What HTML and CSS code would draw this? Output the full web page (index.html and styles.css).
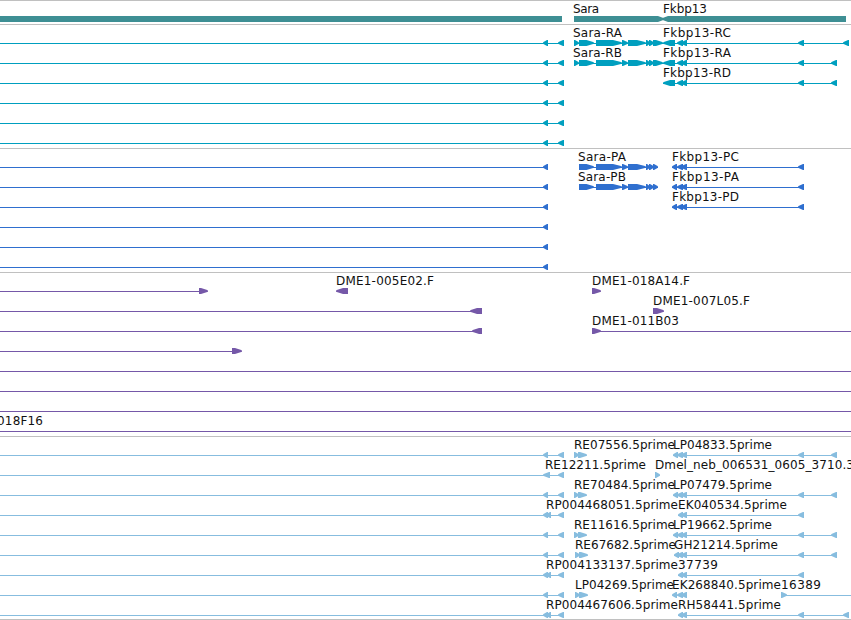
FILE: index.html
```
<!DOCTYPE html>
<html lang="en">
<head>
  <meta charset="UTF-8">
  <meta name="viewport" content="width=device-width, initial-scale=1.0">
  <title>Sara / Fkbp13</title>
  <link rel="stylesheet" href="styles.css">
</head>
<body>
  <div class="browser">
    <div class="track gene" id="gene"></div>
    <div class="track transcript" id="transcript"></div>
    <div class="track protein" id="protein"></div>
    <div class="track clone" id="clone"></div>
    <div class="track est" id="est"></div>
  </div>
  <script src="tracks.js"></script>
</body>
</html>
```

FILE: styles.css
```
body {
  margin: 0;
  background-color: #fff;
  overflow: hidden;
}
.browser {
  width: 851px;
  height: 619px;
  overflow: hidden;
  border-bottom: 1px solid #c0c0c0;
}
.track {
  border-top: 1px solid #c0c0c0;
  padding-top: 3px;
}
.row {
  display: block;
  width: 851px;
  height: 20px;
  overflow: visible;
}
.row text {
  font-family: "DejaVu Sans", sans-serif;
  font-size: 12px;
  fill: #111;
}
.gene {
  fill: #3e8f94;
}
.transcript {
  fill: #009fbf;
}
.protein {
  fill: #2f6fcf;
}
.clone {
  fill: #7558a8;
}
.est {
  fill: #87bddf;
}
```

FILE: tracks.js
```
// line:  [from, to]
// left / right: exons pointing that way, [from, to]
// box:   plain bars
// label: [x, text, width]
const leftGene = { line: [[0, 562]], left: [[543, 548], [558, 564]] };
const saraExons = [[574, 579], [579, 594], [596, 622], [622, 628], [628, 646], [646, 650], [649, 654], [653, 663]];
const saraCoding = [[579, 594], [596, 622], [622, 628], [628, 646], [646, 650], [649, 654], [653, 658]];
const fkbpCoding = [[672, 677], [677, 683], [681, 687], [798, 804]];
const leftCoding = { line: [[0, 547]], left: [[543, 548]] };

function transcript(name, fkbp, end) {
  return {
    line: [[0, 562], [663, end]].concat(name ? [[574, 663]] : []),
    left: [[543, 548], [558, 564], [663, 675], [677, 683], [681, 687], [798, 804], [end - 6, end]],
    right: name ? saraExons : [],
    label: (name ? [[573, name, 50]] : []).concat([[663, fkbp, 69]])
  };
}

function protein(name, fkbp) {
  return {
    line: [[0, 547], [672, 803]].concat(name ? [[579, 658]] : []),
    left: [[543, 548]].concat(fkbpCoding),
    right: name ? saraCoding : [],
    label: (name ? [[578, name, 49]] : []).concat([[672, fkbp, 68]])
  };
}

// spliced EST pair: 5' read of Sara and read of Fkbp13
function estPair(x, name, width, x2, name2, width2, full) {
  return {
    line: [[0, 562]].concat(full ? [[x2, 836]] : []),
    left: [[543, 548], [558, 564], [x2, x2 + 5], [677, 683], [681, 687]].concat(full ? [[798, 804], [831, 837]] : []),
    right: [[x, x + 5], [x + 4, x + 13]],
    label: [[x, name, width], [x2, name2, width2]]
  };
}

function rpRow(name, name2, width2, end) {
  return {
    line: [[0, 562], [678, end]],
    left: [[543, 548], [546, 551], [558, 564], [678, 683], [681, 687], [798, 804]].concat(end > 804 ? [[843, 849]] : []),
    label: [[546, name, 133], [678, name2, width2]]
  };
}

const tracks = {
  gene: [
    { box: [[0, 562]], right: [[574, 664]], left: [[662, 846]], label: [[573, 'Sara', 27], [663, 'Fkbp13', 45]] }
  ],
  transcript: [
    transcript('Sara-RA', 'Fkbp13-RC', 849),
    transcript('Sara-RB', 'Fkbp13-RA', 837),
    transcript('', 'Fkbp13-RD', 837),
    leftGene,
    leftGene,
    leftGene
  ],
  protein: [
    protein('Sara-PA', 'Fkbp13-PC'),
    protein('Sara-PB', 'Fkbp13-PA'),
    protein('', 'Fkbp13-PD'),
    leftCoding,
    leftCoding,
    leftCoding
  ],
  clone: [
    { line: [[0, 207]], right: [[199, 208], [592, 601]], left: [[336, 348]], label: [[336, 'DME1-005E02.F', 99], [592, 'DME1-018A14.F', 99]] },
    { line: [[0, 481]], left: [[470, 482]], right: [[653, 664]], label: [[653, 'DME1-007L05.F', 98]] },
    { line: [[0, 481], [592, 851]], left: [[472, 482]], right: [[592, 601]], label: [[592, 'DME1-011B03', 88]] },
    { line: [[0, 241]], right: [[232, 242]] },
    { line: [[0, 851]] },
    { line: [[0, 851]] },
    { line: [[0, 851]] },
    { line: [[0, 851]], label: [[-3, '018F16', 47]] }
  ],
  est: [
    estPair(574, 'RE07556.5prime', 102, 673, 'LP04833.5prime', 100, true),
    { line: [[0, 562]], left: [[543, 550], [558, 564]], right: [[655, 660]], label: [[545, 'RE12211.5prime', 102], [655, 'Dmel_neb_006531_0605_3710.3', 200]] },
    estPair(574, 'RE70484.5prime', 102, 673, 'LP07479.5prime', 100, true),
    rpRow('RP004468051.5prime', 'EK040534.5prime', 110, 804),
    estPair(574, 'RE11616.5prime', 102, 673, 'LP19662.5prime', 100, true),
    estPair(575, 'RE67682.5prime', 102, 674, 'GH21214.5prime', 105, true),
    rpRow('RP004133137.5prime', '37739', 41, 804),
    estPair(575, 'LP04269.5prime', 100, 672, 'EK268840.5prime', 110, false),
    rpRow('RP004467606.5prime', 'RH58441.5prime', 104, 848)
  ]
};

// one more read shares the row with LP04269
tracks.est[7].line.push([781, 851]);
tracks.est[7].right.push([781, 787]);
tracks.est[7].label.push([781, '16389', 41]);

function exon(a, b, dir) {
  const w = b - a;
  const tip = w > 50 ? 6 : w > 14 ? Math.min(9, w / 2) : w > 7 ? 7 : w - 1;
  const from = dir > 0 ? a : b;
  const neck = dir > 0 ? b - tip : a + tip;
  const mid = dir > 0 ? b - tip / 3 : a + tip / 3;
  const end = dir > 0 ? b : a;
  return `<path d="M${from} 12H${neck}L${mid} 13.6L${end} 14.5V15.8L${mid} 16.6L${neck} 18H${from}Z"/>`;
}

function drawRow(row) {
  let out = '';
  (row.line || []).forEach(([a, b]) => out += `<rect x="${a}" y="15" width="${b - a}" height="1"/>`);
  (row.box || []).forEach(([a, b]) => out += `<rect x="${a}" y="12" width="${b - a}" height="6"/>`);
  (row.left || []).forEach(([a, b]) => out += exon(a, b, -1));
  (row.right || []).forEach(([a, b]) => out += exon(a, b, 1));
  (row.label || []).forEach(([x, t, w]) => out += `<text x="${x}" y="9" textLength="${w - 1}">${t}</text>`);
  return `<svg class="row" viewBox="0 0 851 20">${out}</svg>`;
}

for (const id in tracks) {
  document.getElementById(id).innerHTML = tracks[id].map(drawRow).join('');
}
```
